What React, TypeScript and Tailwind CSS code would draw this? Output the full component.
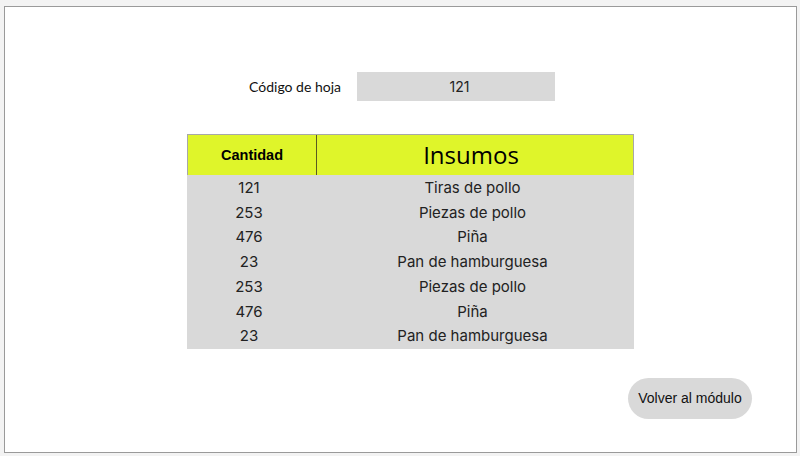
const rows = [
  ['121', 'Tiras de pollo'],
  ['253', 'Piezas de pollo'],
  ['476', 'Piña'],
  ['23', 'Pan de hamburguesa'],
  ['253', 'Piezas de pollo'],
  ['476', 'Piña'],
  ['23', 'Pan de hamburguesa'],
  ['121', 'Tiras de pollo'],
];

export default function App() {
  return (
    <div className="w-[800px] h-[456px] bg-[#f3f3f3] pt-[6px] pl-[4px]">
      <div className="w-[793px] h-[447px] bg-white border border-[#9a9a9a] flex flex-col">
        {/* Código de hoja */}
        <div className="flex items-center mt-[65px] ml-[239px] gap-[16px]">
          <span className="text-[14px] text-[#111] font-['Lato',sans-serif] w-[97px] text-right">Código de hoja</span>
          <div className="w-[198px] h-[29px] bg-[#d9d9d9] flex items-center justify-center pl-[7px] text-[14px] text-[#222] font-['Inter',sans-serif]">
            121
          </div>
        </div>

        {/* Tabla */}
        <div className="mt-[33px] ml-[182px] w-[447px]">
          <div className="flex h-[41px] bg-[#dff52a] border border-[#a8a8a8] border-b-0">
            <div className="w-[129px] border-r border-[#5a5a20] flex items-center justify-center text-[14.5px] font-bold text-black font-['Liberation_Sans',Arial,sans-serif] pt-[2px]">
              Cantidad
            </div>
            <div className="flex-1 flex items-center justify-center pr-[8px] text-[24px] text-black font-['Open_Sans',sans-serif]">
              Insumos
            </div>
          </div>
          <div className="h-[174px] bg-[#d9d9d9] overflow-hidden pt-[1px]">
            {rows.map((r, i) => (
              <div key={i} className="flex h-[24.7px] items-center text-[15px] text-[#222] font-['Inter',sans-serif]">
                <div className="w-[124px] text-center">{r[0]}</div>
                <div className="flex-1 text-center">{r[1]}</div>
              </div>
            ))}
          </div>
        </div>

        {/* Botón */}
        <div className="flex justify-end mt-[29px] mr-[44px]">
          <button className="w-[124px] h-[41px] rounded-full bg-[#d9d9d9] text-[14px] text-[#111] font-['Liberation_Sans',Arial,sans-serif]">
            Volver al módulo
          </button>
        </div>
      </div>
    </div>
  );
}
